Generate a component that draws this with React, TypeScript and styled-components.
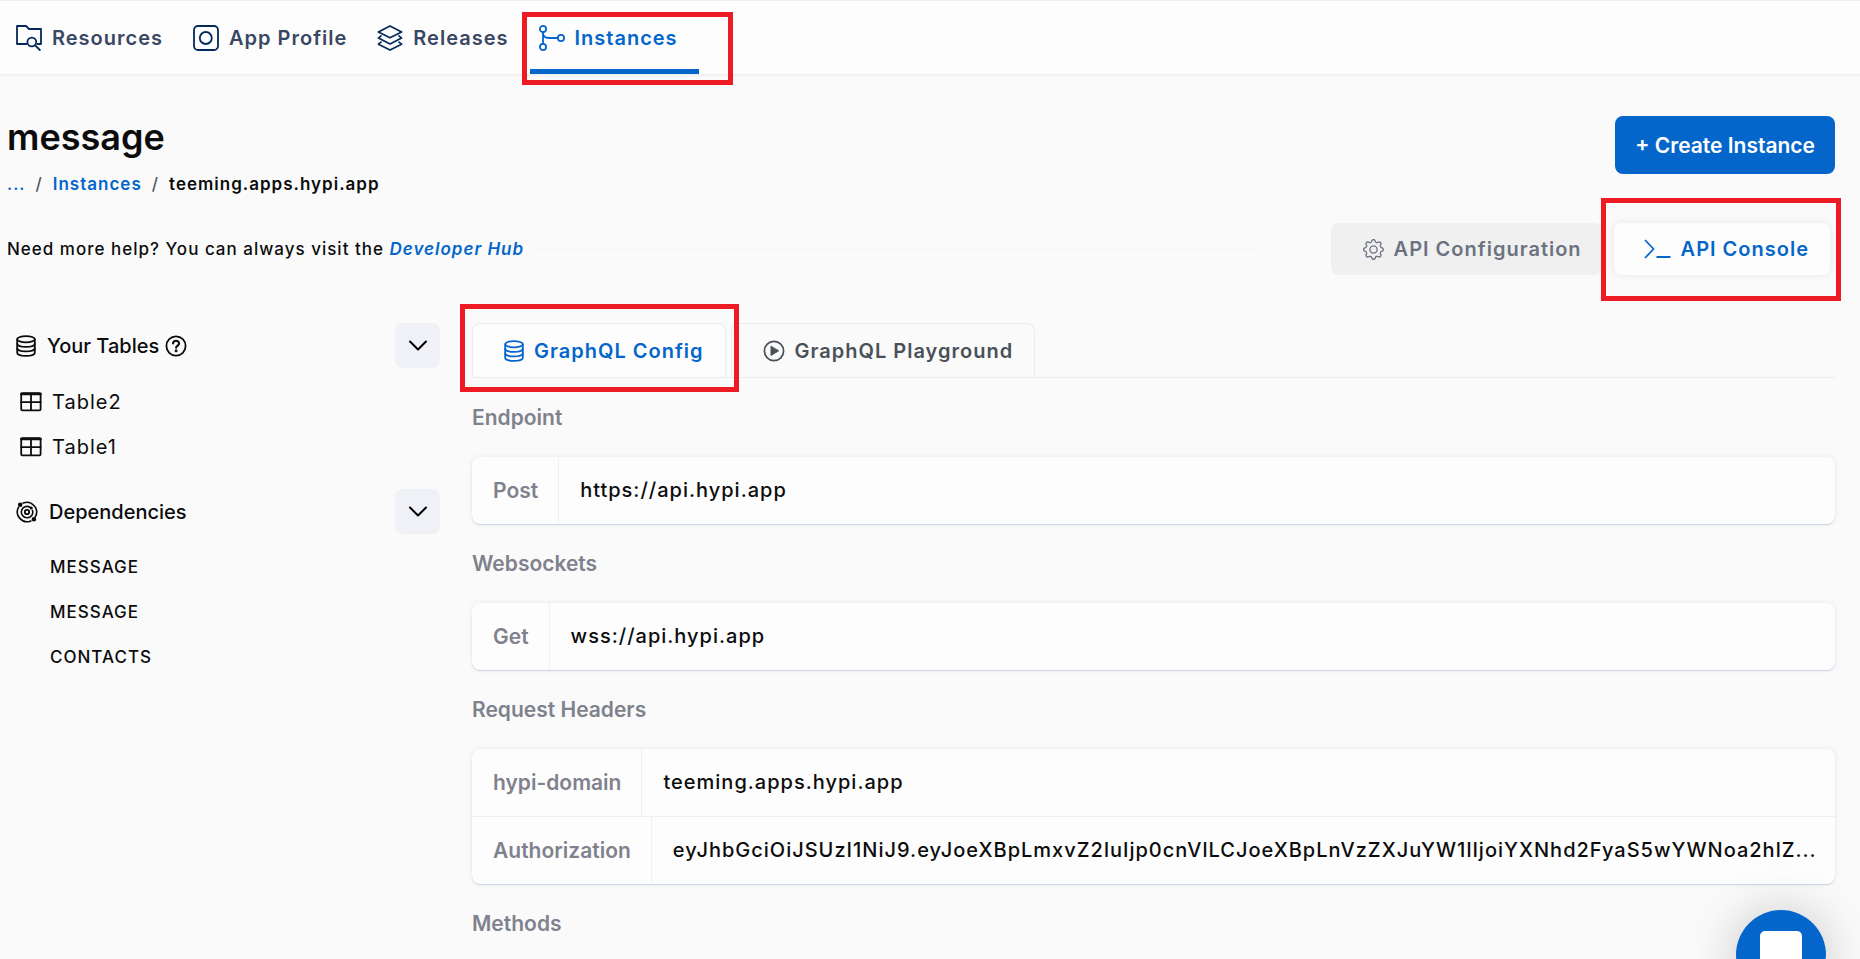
import React from 'react';
import styled, { createGlobalStyle, css } from 'styled-components';
import { BsGear } from 'react-icons/bs';

const color = {
  page: '#fafafa',
  surface: '#fdfdfd',
  blue: '#0466cb',
  navy: '#03295a',
  navText: '#3a4763',
  ink: '#0c0c0c',
  muted: '#7f828d',
  line: '#ececec',
  mark: '#ed1c24',
};

const tracked = css`
  letter-spacing: 1px;
`;

const GlobalStyle = createGlobalStyle`
  *, *::before, *::after { box-sizing: border-box; }
  body {
    margin: 0;
    background: ${color.page};
    color: ${color.ink};
    font-family: Inter, "Liberation Sans", sans-serif;
    font-size: 20px;
    font-weight: 500;
  }
  button { font: inherit; border: 0; background: none; padding: 0; cursor: pointer; }
  a { text-decoration: none; color: ${color.blue}; }
  h1, h2, h3, p, ul, ol, dl, dd { margin: 0; padding: 0; font-weight: inherit; }
  ul, ol { list-style: none; }
  svg { display: block; flex: none; }
`;

const Page = styled.div`
  height: 100vh;
  overflow: hidden;
`;

const Highlight = styled.span<{ $top: number; $right: number; $bottom: number; $left: number }>`
  position: absolute;
  top: ${(p) => p.$top}px;
  right: ${(p) => p.$right}px;
  bottom: ${(p) => p.$bottom}px;
  left: ${(p) => p.$left}px;
  border: 5px solid ${color.mark};
  pointer-events: none;
  z-index: 2;
`;

const NavBar = styled.nav`
  display: flex;
  height: 75px;
  padding-left: 7px;
  background: ${color.surface};
  border-top: 1px solid #f0f0f0;
  border-bottom: 1px solid ${color.line};
  box-shadow: 0 1px 2px rgba(0, 0, 0, 0.04);
`;

const NavLink = styled.a<{ $active?: boolean }>`
  ${tracked}
  position: relative;
  display: flex;
  align-items: center;
  gap: 10px;
  padding: 5px 21px 0 9px;
  border-bottom: 5px solid ${(p) => (p.$active ? color.blue : 'transparent')};
  color: ${(p) => (p.$active ? color.blue : color.navText)};
  font-weight: 600;
  svg { color: ${(p) => (p.$active ? color.blue : color.navy)}; }
`;

const Content = styled.main`
  padding: 41px 25px 0 7px;
`;

const Header = styled.header`
  display: flex;
  justify-content: space-between;
  align-items: flex-start;
`;

const Title = styled.h1`
  font-size: 36px;
  font-weight: 600;
  line-height: 42px;
`;

const Breadcrumb = styled.ol`
  ${tracked}
  display: flex;
  gap: 10px;
  margin-top: 12px;
  font-size: 17px;
  line-height: 28px;
`;

const Crumb = styled.li`
  font-weight: 600;
`;

const Slash = styled.li`
  color: #4f5663;
`;

const CreateButton = styled.button`
  height: 58px;
  padding: 0 20px;
  border-radius: 8px;
  background: ${color.blue};
  color: #fff;
  font-size: 21px;
  font-weight: 600;
`;

const HelpRow = styled.div`
  display: flex;
  align-items: center;
  margin-top: 25px;
`;

const HelpText = styled.p`
  ${tracked}
  font-size: 17px;
  line-height: 28px;
  a { font-style: italic; font-weight: 600; }
`;

const Rule = styled.div`
  flex: 1;
  height: 1px;
  margin: 0 70px 0 8px;
  background: #f5f5f5;
`;

const Switcher = styled.div`
  display: flex;
  margin-right: 5px;
`;

const SwitchButton = styled.button<{ $active?: boolean }>`
  ${tracked}
  position: relative;
  display: flex;
  align-items: center;
  gap: 10px;
  height: 52px;
  padding: ${(p) => (p.$active ? '0 21px 0 30px' : '0 20px 0 32px')};
  margin-left: ${(p) => (p.$active ? '12px' : '0')};
  border-radius: 8px;
  background: ${(p) => (p.$active ? color.surface : '#f0f0f0')};
  color: ${(p) => (p.$active ? color.blue : '#6c7280')};
  font-weight: 600;
  box-shadow: ${(p) => (p.$active ? '0 0 10px rgba(0, 0, 0, 0.08)' : 'none')};
`;

const Columns = styled.div`
  display: flex;
  gap: 32px;
  margin-top: 48px;
`;

const Sidebar = styled.aside`
  flex: 0 0 433px;
`;

const SideSection = styled.section`
  margin-bottom: 20px;
`;

const SideHeader = styled.div`
  display: flex;
  align-items: center;
  justify-content: space-between;
  height: 45px;
  margin-bottom: 11px;
`;

const SideTitle = styled.h2`
  display: flex;
  align-items: center;
  padding-left: 9px;
  font-size: 20px;
  font-weight: 500;
  svg:first-child { margin-right: 11px; }
  svg:last-child:not(:first-child) { margin-left: 6px; }
`;

const ToggleButton = styled.button`
  display: grid;
  place-items: center;
  width: 45px;
  height: 45px;
  border-radius: 8px;
  background: #f0f1f6;
`;

const TableItem = styled.li`
  ${tracked}
  display: flex;
  align-items: center;
  gap: 10px;
  height: 45px;
  padding-left: 13px;
  font-weight: 400;
`;

const DependencyItem = styled.li`
  ${tracked}
  height: 45px;
  padding-left: 43px;
  font-size: 17px;
  line-height: 45px;
`;

const Panel = styled.div`
  flex: 1;
  min-width: 0;
`;

const TabBar = styled.div`
  display: flex;
  gap: 5px;
  height: 55px;
  border-bottom: 1px solid ${color.line};
`;

const Tab = styled.button<{ $active?: boolean }>`
  ${tracked}
  position: relative;
  display: flex;
  align-items: center;
  gap: 10px;
  padding: 0 21px 0 31px;
  border: 1px solid ${color.line};
  border-bottom: 0;
  border-radius: 8px 8px 0 0;
  background: ${(p) => (p.$active ? color.surface : color.page)};
  color: ${(p) => (p.$active ? color.blue : '#4a5058')};
  font-weight: 600;
`;

const SectionTitle = styled.h3`
  padding: 24px 0;
  font-size: 21px;
  font-weight: 600;
  line-height: 31px;
  color: ${color.muted};
`;

const Card = styled.dl`
  border-radius: 8px;
  background: ${color.surface};
  box-shadow: 0 1px 1px #cdd4e4, 0 0 5px rgba(90, 105, 160, 0.12);
`;

const CardRow = styled.div`
  display: flex;
  & + & { border-top: 1px solid #f0f0f2; }
`;

const Key = styled.dt`
  flex: none;
  padding: 0 20px 0 21px;
  border-right: 1px solid #f0f0f2;
  font-size: 21px;
  font-weight: 600;
  line-height: 67px;
  color: ${color.muted};
`;

const Value = styled.dd`
  ${tracked}
  min-width: 0;
  && { padding: 0 12px 0 21px; }
  line-height: 67px;
  white-space: nowrap;
  overflow: hidden;
  text-overflow: ellipsis;
`;

const ChatButton = styled.button`
  position: fixed;
  right: 34px;
  bottom: -41px;
  width: 90px;
  height: 90px;
  border-radius: 50%;
  background: ${color.blue};
  box-shadow: 0 2px 50px rgba(0, 0, 0, 0.22);
  z-index: 3;
  svg { margin: 0 auto; }
`;

const stroke = { fill: 'none', stroke: 'currentColor', strokeLinecap: 'round', strokeLinejoin: 'round' } as const;

const FolderSearchIcon = () => (
  <svg width="26" height="26" viewBox="0 0 26 26" {...stroke} strokeWidth="1.8" aria-hidden>
    <path d="M10.5 19H1V1h9l3 3h12v15h-3.5" />
    <circle cx="15.8" cy="17" r="4.4" />
    <path d="M19 20.2l4.8 4.8" />
  </svg>
);

const ProfileIcon = () => (
  <svg width="26" height="26" viewBox="0 0 26 26" {...stroke} strokeWidth="1.8" aria-hidden>
    <rect x="1" y="1" width="24" height="24" rx="4" />
    <circle cx="12.8" cy="13" r="6" />
  </svg>
);

const LayersIcon = () => (
  <svg width="26" height="26" viewBox="0 0 26 26" {...stroke} strokeWidth="1.7" aria-hidden>
    <path d="M13 .9l11.6 6.2L13 12.8 1.4 7.1z" />
    <path d="M4 10.9l-2.6 2.2L13 18.9l11.6-5.8-2.6-2.2" />
    <path d="M4 17.1l-2.6 2.1L13 25.1l11.6-5.9-2.6-2.1" />
  </svg>
);

const BranchIcon = () => (
  <svg width="26" height="26" viewBox="0 0 26 26" {...stroke} strokeWidth="1.8" aria-hidden>
    <circle cx="4" cy="4" r="3.1" />
    <circle cx="4" cy="22" r="3.1" />
    <circle cx="22" cy="13" r="3.1" />
    <path d="M4 7.1v11.8M4 7.5c0 3.5 2.5 5.5 6 5.5h8.9" />
  </svg>
);

const TerminalIcon = () => (
  <svg width="27" height="20" viewBox="0 0 27 20" {...stroke} strokeWidth="1.8" strokeLinecap="butt" aria-hidden>
    <path d="M1 1l8.6 9L1 19M12.5 18h14" />
  </svg>
);

const DatabaseIcon = () => (
  <svg width="20" height="22" viewBox="0 0 20 22" {...stroke} strokeWidth="1.8" aria-hidden>
    <ellipse cx="10" cy="4.2" rx="8.8" ry="3.1" />
    <path d="M1.2 4.2v13.6c0 1.7 3.9 3.1 8.8 3.1s8.8-1.4 8.8-3.1V4.2" />
    <path d="M1.2 8.8c0 1.7 3.9 3.1 8.8 3.1s8.8-1.4 8.8-3.1M1.2 13.3c0 1.7 3.9 3.1 8.8 3.1s8.8-1.4 8.8-3.1" />
  </svg>
);

const PlayIcon = () => (
  <svg width="22" height="22" viewBox="0 0 22 22" {...stroke} strokeWidth="1.7" aria-hidden>
    <circle cx="11" cy="11" r="9.6" />
    <path d="M8 6.6v8.8l7.4-4.4z" fill="currentColor" strokeWidth="1" />
  </svg>
);

const QuestionIcon = () => (
  <svg width="22" height="22" viewBox="0 0 22 22" {...stroke} strokeWidth="1.8" aria-hidden>
    <circle cx="11" cy="11" r="9.6" />
    <path d="M8 8.4c.2-1.7 1.4-2.6 3-2.6 1.8 0 3.1 1 3.1 2.6 0 2.2-3 2.1-3 4.4" strokeWidth="2.1" />
    <circle cx="11.1" cy="15.8" r=".6" />
  </svg>
);

const TableIcon = () => (
  <svg width="22" height="20" viewBox="0 0 22 20" {...stroke} strokeWidth="1.8" aria-hidden>
    <rect x="1.2" y="1.2" width="19.4" height="17.2" rx="1.2" />
    <path d="M1.2 2h19.4" strokeWidth="2.4" />
    <path d="M11 2v16M1.2 10.2h19.4" />
  </svg>
);

const OrbitIcon = () => (
  <svg width="22" height="22" viewBox="0 0 22 22" {...stroke} strokeWidth="1.6" aria-hidden>
    <circle cx="11" cy="11" r="2.2" strokeWidth="1.8" />
    <path d="M14 6.2a5.7 5.7 0 1 0 2.5 3.2" />
    <path d="M7.2 2.1A9.7 9.7 0 0 1 19.2 16M14.8 19.9A9.7 9.7 0 0 1 2.6 6.2" />
    <circle cx="4.2" cy="3.8" r="1.5" fill="currentColor" />
    <circle cx="17.9" cy="18.3" r="1.5" fill="currentColor" />
    <circle cx="15.2" cy="7" r=".8" fill="currentColor" />
  </svg>
);

const ChevronIcon = () => (
  <svg width="20" height="12" viewBox="0 0 20 12" {...stroke} strokeWidth="2" aria-hidden>
    <path d="M2 1.5l8 8 8-8" />
  </svg>
);

const ChatIcon = () => (
  <svg width="42" height="48" viewBox="0 0 42 48" fill="#fff" aria-hidden>
    <path d="M5 0h32a5 5 0 0 1 5 5v43l-8-6H5a5 5 0 0 1-5-5V5a5 5 0 0 1 5-5z" />
  </svg>
);

const navItems = [
  { label: 'Resources', icon: <FolderSearchIcon /> },
  { label: 'App Profile', icon: <ProfileIcon /> },
  { label: 'Releases', icon: <LayersIcon /> },
  { label: 'Instances', icon: <BranchIcon />, active: true },
];

const token =
  'eyJhbGciOiJSUzI1NiJ9.eyJoeXBpLmxvZ2luIjp0cnVlLCJoeXBpLnVzZXJuYW1lIjoiYXNhd2FyaS5wYWNoa2hlZ...';

const sections: { title: string; rows: [string, string][] }[] = [
  { title: 'Endpoint', rows: [['Post', 'https://api.hypi.app']] },
  { title: 'Websockets', rows: [['Get', 'wss://api.hypi.app']] },
  {
    title: 'Request Headers',
    rows: [
      ['hypi-domain', 'teeming.apps.hypi.app'],
      ['Authorization', token],
    ],
  },
  { title: 'Methods', rows: [] },
];

export default function App() {
  return (
    <Page>
      <GlobalStyle />
      <NavBar>
        {navItems.map((item) => (
          <NavLink key={item.label} href="#" $active={item.active}>
            {item.icon}
            {item.label}
            {item.active && <Highlight $top={11} $right={-34} $bottom={-16} $left={-8} />}
          </NavLink>
        ))}
      </NavBar>

      <Content>
        <Header>
          <div>
            <Title>message</Title>
            <Breadcrumb>
              <li><a href="#">...</a></li>
              <Slash>/</Slash>
              <Crumb><a href="#">Instances</a></Crumb>
              <Slash>/</Slash>
              <Crumb>teeming.apps.hypi.app</Crumb>
            </Breadcrumb>
          </div>
          <CreateButton>+ Create Instance</CreateButton>
        </Header>

        <HelpRow>
          <HelpText>
            Need more help? You can always visit the <a href="#">Developer Hub</a>
          </HelpText>
          <Rule />
          <Switcher>
            <SwitchButton>
              <BsGear size={21} />
              API Configuration
            </SwitchButton>
            <SwitchButton $active>
              <TerminalIcon />
              API Console
              <Highlight $top={-25} $right={-11} $bottom={-26} $left={-13} />
            </SwitchButton>
          </Switcher>
        </HelpRow>

        <Columns>
          <Sidebar>
            <SideSection>
              <SideHeader>
                <SideTitle>
                  <DatabaseIcon />
                  Your Tables
                  <QuestionIcon />
                </SideTitle>
                <ToggleButton aria-label="Toggle tables"><ChevronIcon /></ToggleButton>
              </SideHeader>
              <ul>
                {['Table2', 'Table1'].map((name) => (
                  <TableItem key={name}>
                    <TableIcon />
                    {name}
                  </TableItem>
                ))}
              </ul>
            </SideSection>
            <SideSection>
              <SideHeader>
                <SideTitle>
                  <OrbitIcon />
                  Dependencies
                </SideTitle>
                <ToggleButton aria-label="Toggle dependencies"><ChevronIcon /></ToggleButton>
              </SideHeader>
              <ul>
                {['MESSAGE', 'MESSAGE', 'CONTACTS'].map((name, i) => (
                  <DependencyItem key={i}>{name}</DependencyItem>
                ))}
              </ul>
            </SideSection>
          </Sidebar>

          <Panel>
            <TabBar>
              <Tab $active>
                <DatabaseIcon />
                GraphQL Config
                <Highlight $top={-20} $right={-14} $bottom={-15} $left={-13} />
              </Tab>
              <Tab>
                <PlayIcon />
                GraphQL Playground
              </Tab>
            </TabBar>
            {sections.map((section) => (
              <section key={section.title}>
                <SectionTitle>{section.title}</SectionTitle>
                {section.rows.length > 0 && (
                  <Card>
                    {section.rows.map(([key, value]) => (
                      <CardRow key={key}>
                        <Key>{key}</Key>
                        <Value>{value}</Value>
                      </CardRow>
                    ))}
                  </Card>
                )}
              </section>
            ))}
          </Panel>
        </Columns>
      </Content>

      <ChatButton aria-label="Open chat"><ChatIcon /></ChatButton>
    </Page>
  );
}
